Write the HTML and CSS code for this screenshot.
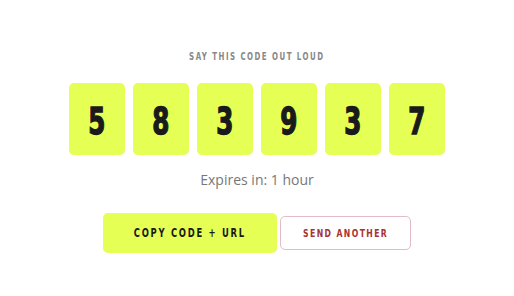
FILE: index.html
```html
<!DOCTYPE html>
<html lang="en">
<head>
    <meta charset="UTF-8">
    <meta name="viewport" content="width=device-width, initial-scale=1.0">
    <title>Share code</title>
    <link rel="stylesheet" href="styles.css">
</head>
<body>
    <div class="share">
        <p class="label"><span class="narrow">Say this code out loud</span></p>

        <div class="digits">
            <div class="digit"><span class="narrow">5</span></div>
            <div class="digit"><span class="narrow">8</span></div>
            <div class="digit"><span class="narrow">3</span></div>
            <div class="digit"><span class="narrow">9</span></div>
            <div class="digit"><span class="narrow">3</span></div>
            <div class="digit"><span class="narrow">7</span></div>
        </div>

        <p class="expires">Expires in: 1 hour</p>

        <div class="actions">
            <button class="btn btn-primary"><span class="narrow">Copy code + URL</span></button>
            <button class="btn btn-outline"><span class="narrow">Send another</span></button>
        </div>
    </div>
</body>
</html>
```

FILE: styles.css
```css
* {
    margin: 0;
    padding: 0;
    box-sizing: border-box;
}

body {
    font-family: 'Open Sans', sans-serif;
    background: #fff;
    width: 514px;
    height: 296px;
}

.narrow {
    display: inline-block;
    transform: scaleX(0.78);
    white-space: nowrap;
}

.share {
    display: flex;
    flex-direction: column;
    align-items: center;
    padding-top: 51px;
}

.label {
    font-family: 'DejaVu Sans Condensed', sans-serif;
    font-weight: bold;
    font-size: 10px;
    letter-spacing: 1.9px;
    color: #888;
    text-transform: uppercase;
    line-height: 12px;
}

.digits {
    display: flex;
    gap: 8px;
    margin-top: 20px;
}

.digit {
    width: 56px;
    height: 72px;
    background: #e6ff55;
    border-radius: 5px;
    display: flex;
    align-items: center;
    justify-content: center;
    font-family: 'DejaVu Sans Condensed', sans-serif;
    font-weight: bold;
    font-size: 38px;
    color: #1a1a1a;
    padding-top: 4px;
    -webkit-text-stroke: 1.4px #1a1a1a;
}

.digit .narrow {
    transform: scaleX(0.72);
}

.expires {
    margin-top: 16px;
    font-size: 14px;
    color: #777;
    line-height: 18px;
}

.actions {
    display: flex;
    align-items: center;
    gap: 3px;
    margin-top: 24px;
}

.btn {
    font-family: 'DejaVu Sans Condensed', sans-serif;
    font-weight: bold;
    text-transform: uppercase;
    border-radius: 5px;
    cursor: pointer;
}

.btn-primary {
    width: 174px;
    height: 40px;
    background: #e6ff55;
    border: none;
    font-size: 12px;
    letter-spacing: 2.2px;
    color: #1a1a1a;
}

.btn-outline {
    width: 131px;
    height: 34px;
    background: #fff;
    border: 1px solid #e2bcc6;
    font-size: 11px;
    letter-spacing: 1.8px;
    color: #a83232;
}
```
